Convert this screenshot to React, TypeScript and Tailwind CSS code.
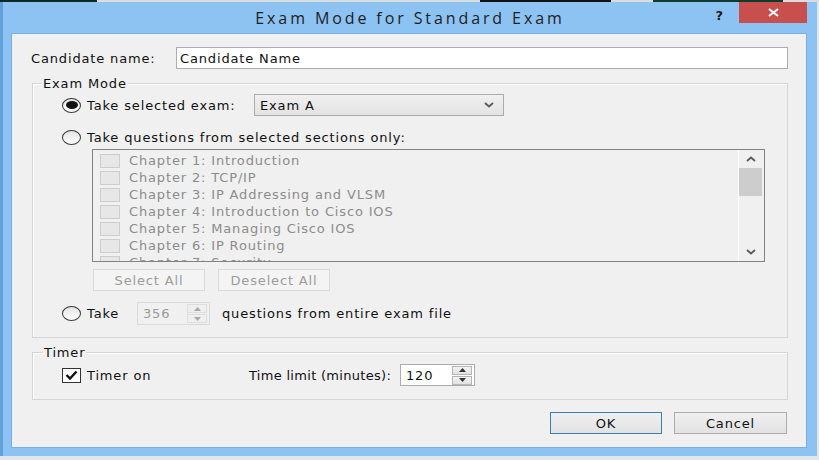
import React from "react";

const T = "font-['DejaVu_Sans',sans-serif] text-[13px] tracking-[0.85px] leading-none";

const chapters = [
  "Chapter 1: Introduction",
  "Chapter 2: TCP/IP",
  "Chapter 3: IP Addressing and VLSM",
  "Chapter 4: Introduction to Cisco IOS",
  "Chapter 5: Managing Cisco IOS",
  "Chapter 6: IP Routing",
  "Chapter 7: Security",
];

function Radio({ checked }: { checked?: boolean }) {
  return (
    <span className="flex h-[15px] w-[19px] shrink-0 items-center justify-center rounded-[50%] border border-[#3a3a3a] bg-gradient-to-b from-[#e4e4e4] to-white">
      {checked && <span className="h-[8px] w-[12px] rounded-[50%] bg-[#111]" />}
    </span>
  );
}

function SpinBtn({ up, disabled }: { up?: boolean; disabled?: boolean }) {
  return (
    <div
      className={
        disabled
          ? "flex h-[9px] w-[20px] items-center justify-center border border-[#dedede] bg-[#efefef]"
          : "flex h-[9px] w-[20px] items-center justify-center border border-[#b5b5b5] bg-gradient-to-b from-[#f3f3f3] to-[#e2e2e2]"
      }
    >
      <svg width="7" height="4" viewBox="0 0 7 4">
        {up ? (
          <path d="M0 4 L3.5 0 L7 4 Z" fill={disabled ? "#a8a8a8" : "#333"} />
        ) : (
          <path d="M0 0 L3.5 4 L7 0 Z" fill={disabled ? "#a8a8a8" : "#333"} />
        )}
      </svg>
    </div>
  );
}

function Spin({ value, disabled }: { value: string; disabled?: boolean }) {
  return (
    <div
      className={
        disabled
          ? "flex h-[23px] w-[73px] shrink-0 items-center border border-[#dadada] bg-[#f0f0f0] text-[#9a9a9a]"
          : "flex h-[22px] w-[75px] shrink-0 items-center border border-[#acacac] bg-white text-[#111]"
      }
    >
      <span className="flex-1 pl-[5px]">{value}</span>
      <div className="mr-[2px] flex flex-col gap-[1px]">
        <SpinBtn up disabled={disabled} />
        <SpinBtn disabled={disabled} />
      </div>
    </div>
  );
}

function Chevron({ up }: { up?: boolean }) {
  return (
    <svg width="10" height="6" viewBox="0 0 10 6">
      <path
        d={up ? "M1 5 L5 1.5 L9 5" : "M1 1 L5 4.5 L9 1"}
        fill="none"
        stroke="#5a5a5a"
        strokeWidth="1.8"
      />
    </svg>
  );
}

export default function App() {
  return (
    <div className="flex h-[460px] w-[819px] flex-col overflow-hidden bg-[#dfe6ec]">
      {/* background strip */}
      <div className="flex h-[2px] shrink-0">
        <div className="w-[97px] bg-[#0d2a24]" />
        <div className="w-[383px] bg-[#d9dde0]" />
        <div className="w-[131px] bg-[#111]" />
        <div className="w-[42px] bg-[#d9dde0]" />
        <div className="w-[130px] bg-[#0f3a2c]" />
        <div className="flex-1 bg-[#d9dde0]" />
      </div>

      {/* window */}
      <div className="flex h-[454px] w-[817px] shrink-0 flex-col border-l-[3px] border-[#62a0da] bg-[#8cc3f3]">
        {/* title bar */}
        <div className="grid h-[31px] shrink-0 grid-cols-[1fr_auto_1fr]">
          <div />
          <div className="flex items-center font-['Open_Sans',sans-serif] text-[16px] tracking-[2.9px] text-[#1e1e1e]">
            Exam Mode for Standard Exam
          </div>
          <div className="flex items-start justify-end pr-[10px]">
            <span className="mt-[4px] mr-[16px] font-['DejaVu_Sans',sans-serif] text-[13px] font-bold text-[#1a1a1a]">?</span>
            <div className="flex h-[21px] w-[68px] items-center justify-center bg-[#c7504f]">
              <svg width="11" height="9" viewBox="0 0 11 9">
                <path d="M1 1 L10 8 M10 1 L1 8" stroke="white" strokeWidth="2" />
              </svg>
            </div>
          </div>
        </div>

        {/* content */}
        <div className={`ml-[8px] flex h-[415px] w-[796px] shrink-0 flex-col border border-[#78afe2] bg-[#f0f0f0] text-[#111] ${T}`}>
          {/* candidate name */}
          <div className="mt-[13px] flex items-center pl-[19px]">
            <span className="w-[145px]">Candidate name:</span>
            <div className="flex h-[22px] w-[612px] items-center border border-[#abadb3] bg-white pl-[3px]">
              Candidate Name
            </div>
          </div>

          {/* exam mode group */}
          <div className="relative mt-[14px] ml-[20px] w-[756px] border border-[#d5d5d5] pl-[29px] pt-[10px] pb-[12px] shadow-[inset_1px_1px_0_#fff]">
            <span className="absolute -top-[7px] left-[9px] bg-[#f0f0f0] px-[1px]">Exam Mode</span>

            <div className="flex h-[22px] items-center">
              <div className="flex w-[192px] items-center gap-[6px]">
                <Radio checked />
                <span>Take selected exam:</span>
              </div>
              <div className="flex h-[22px] w-[250px] items-center justify-between border border-[#acacac] bg-gradient-to-b from-[#f0f0f0] to-[#e3e3e3] pl-[5px] pr-[9px]">
                <span>Exam A</span>
                <Chevron />
              </div>
            </div>

            <div className="mt-[11px] flex h-[20px] items-center gap-[6px]">
              <Radio />
              <span>Take questions from selected sections only:</span>
            </div>

            {/* list */}
            <div className="mt-[2px] ml-[30px] flex h-[113px] w-[673px] border border-[#828282] bg-[#f0f0f0]">
              <div className="flex flex-1 flex-col overflow-hidden pt-[2px] pl-[7px]">
                {chapters.map((c) => (
                  <div key={c} className="flex h-[17px] shrink-0 items-center gap-[9px] text-[#8c8c8c]">
                    <span className="h-[14px] w-[20px] shrink-0 border border-[#cdcdcd] bg-[#e7e7e7]" />
                    <span>{c}</span>
                  </div>
                ))}
              </div>
              <div className="flex w-[26px] flex-col border-l border-white pr-[2px]">
                <div className="flex h-[18px] items-center justify-center">
                  <Chevron up />
                </div>
                <div className="h-[28px] bg-[#cdcdcd]" />
                <div className="flex-1" />
                <div className="flex h-[18px] items-center justify-center">
                  <Chevron />
                </div>
              </div>
            </div>

            {/* buttons */}
            <div className="mt-[7px] ml-[31px] flex gap-[13px] text-[#9c9c9c]">
              <div className="flex h-[22px] w-[112px] items-center justify-center border border-[#d9d9d9] bg-[#f4f4f4]">Select All</div>
              <div className="flex h-[22px] w-[112px] items-center justify-center border border-[#d9d9d9] bg-[#f4f4f4]">Deselect All</div>
            </div>

            {/* take N */}
            <div className="mt-[11px] flex h-[23px] items-center">
              <Radio />
              <span className="ml-[6px] w-[50px]">Take</span>
              <Spin value="356" disabled />
              <span className="ml-[12px]">questions from entire exam file</span>
            </div>
          </div>

          {/* timer group */}
          <div className="relative mt-[14px] ml-[20px] w-[756px] border border-[#d5d5d5] pl-[29px] pt-[11px] pb-[13px] shadow-[inset_1px_1px_0_#fff]">
            <span className="absolute -top-[7px] left-[10px] bg-[#f0f0f0] px-[1px]">Timer</span>
            <div className="flex h-[22px] items-center">
              <div className="flex w-[187px] items-center gap-[6px]">
                <span className="flex h-[15px] w-[19px] shrink-0 items-center justify-center border border-[#333] bg-white">
                  <svg width="13" height="10" viewBox="0 0 13 10">
                    <path d="M1.5 5 L5 8.5 L11.5 1.5" fill="none" stroke="#111" strokeWidth="2.4" />
                  </svg>
                </span>
                <span>Timer on</span>
              </div>
              <span className="w-[151px] whitespace-nowrap tracking-[0.3px]">Time limit (minutes):</span>
              <Spin value="120" />
            </div>
          </div>

          {/* ok / cancel */}
          <div className="mt-[12px] flex justify-end gap-[12px] pr-[19px]">
            <div className="flex h-[22px] w-[112px] items-center justify-center border border-[#3c7fb1] bg-gradient-to-b from-[#f0f0f0] to-[#e2e2e2]">
              OK
            </div>
            <div className="flex h-[22px] w-[113px] items-center justify-center border border-[#acacac] bg-gradient-to-b from-[#f0f0f0] to-[#e2e2e2]">
              Cancel
            </div>
          </div>
        </div>
      </div>
    </div>
  );
}
